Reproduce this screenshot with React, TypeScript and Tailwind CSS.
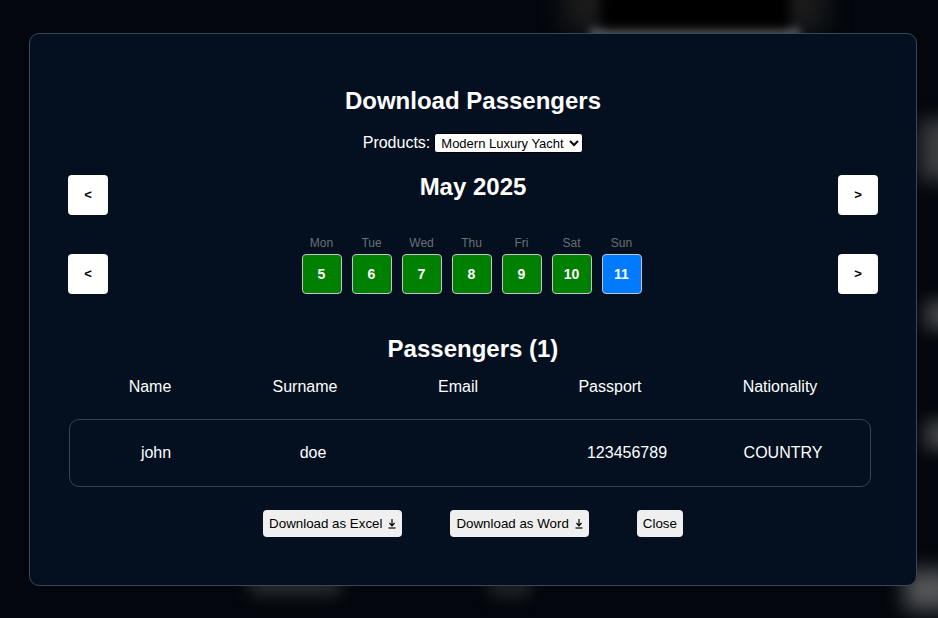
import React from 'react';

const DAYS = [
  { label: 'Mon', day: 5 },
  { label: 'Tue', day: 6 },
  { label: 'Wed', day: 7 },
  { label: 'Thu', day: 8 },
  { label: 'Fri', day: 9 },
  { label: 'Sat', day: 10 },
  { label: 'Sun', day: 11, selected: true },
];

function DownloadGlyph() {
  return (
    <svg width="8" height="11" viewBox="0 0 8 11" className="ml-[6px] inline-block">
      <path d="M4 1 V7.5 M1.5 5 L4 7.8 L6.5 5" stroke="#000" strokeWidth="1.2" fill="none" />
      <path d="M0.5 10 H7.5" stroke="#000" strokeWidth="1.2" />
    </svg>
  );
}

function NavButton({ children }: { children: React.ReactNode }) {
  return (
    <button className="w-[40px] h-[40px] bg-white rounded-[4px] text-black text-[13px] font-bold flex items-center justify-center shrink-0">
      {children}
    </button>
  );
}

export default function App() {
  return (
    <div className="relative w-[938px] h-[618px] overflow-hidden bg-[#03070d] font-['Liberation_Sans',Arial,sans-serif]">
      {/* blurred page behind the modal */}
      <div className="absolute left-[565px] top-[-20px] w-[260px] h-[50px] bg-[#1c1c1c] blur-[12px]" />
      <div className="absolute left-[590px] top-[28px] w-[210px] h-[12px] bg-[#777] blur-[5px] opacity-80" />
      <div className="absolute left-[600px] top-[-10px] w-[190px] h-[38px] bg-[#000] blur-[6px]" />
      <div className="absolute left-[920px] top-[120px] w-[40px] h-[60px] bg-[#555] blur-[10px] opacity-70" />
      <div className="absolute left-[925px] top-[300px] w-[40px] h-[30px] bg-[#666] blur-[8px] opacity-60" />
      <div className="absolute left-[925px] top-[420px] w-[40px] h-[30px] bg-[#666] blur-[8px] opacity-60" />
      <div className="absolute left-[905px] top-[570px] w-[50px] h-[40px] bg-[#777] blur-[10px] opacity-70" />
      <div className="absolute left-[250px] top-[575px] w-[90px] h-[20px] bg-[#444] blur-[8px] opacity-60" />
      <div className="absolute left-[490px] top-[578px] w-[40px] h-[18px] bg-[#444] blur-[8px] opacity-50" />

      <div className="absolute left-[29px] top-[33px] w-[888px] h-[553px] rounded-[10px] border border-[#3b4757] bg-[#04101f] px-[38px] text-white">
        <h2 className="mt-[53px] text-center text-[24px] leading-[28px] font-bold">Download Passengers</h2>

        <div className="mt-[18px] flex items-center justify-center gap-[4px] text-[16px] leading-[20px]">
          <span>Products:</span>
          <select className="h-[20px] bg-white text-black text-[13px] border border-black rounded-[3px] px-[2px] font-['Liberation_Sans',Arial,sans-serif]">
            <option>Modern Luxury Yacht</option>
          </select>
        </div>

        <div className="mt-[22px] flex items-start justify-between">
          <NavButton>&lt;</NavButton>
          <h2 className="mt-[-2px] text-[24px] leading-[28px] font-bold">May 2025</h2>
          <NavButton>&gt;</NavButton>
        </div>

        <div className="mt-[21px] flex items-end justify-between">
          <NavButton>&lt;</NavButton>
          <div className="flex gap-[10px] mr-[3px]">
            {DAYS.map((d) => (
              <div key={d.label} className="flex flex-col items-center">
                <span className="text-[12px] leading-[14px] text-[#6b6f75] mb-[4px]">{d.label}</span>
                <div
                  className={
                    d.selected
                      ? 'w-[40px] h-[40px] rounded-[4px] border border-[#bfc6cc] bg-[#007bff] flex items-center justify-center text-[14px] font-bold'
                      : 'w-[40px] h-[40px] rounded-[4px] border border-[#bfc6cc] bg-[#008000] flex items-center justify-center text-[14px] font-bold'
                  }
                >
                  {d.day}
                </div>
              </div>
            ))}
          </div>
          <NavButton>&gt;</NavButton>
        </div>

        <h2 className="mt-[41px] text-center text-[24px] leading-[28px] font-bold">Passengers (1)</h2>

        <div className="mt-[14px] ml-[2px] grid grid-cols-[160px_150px_156px_148px_192px] text-[16px] leading-[20px] text-center">
          <span>Name</span>
          <span>Surname</span>
          <span>Email</span>
          <span>Passport</span>
          <span>Nationality</span>
        </div>

        <div className="mt-[22px] ml-[1px] w-[802px] h-[68px] rounded-[10px] border border-[#39434f] grid grid-cols-[172px_142px_156px_174px_138px] items-center text-[16px] text-center">
          <span>john</span>
          <span>doe</span>
          <span></span>
          <span>123456789</span>
          <span>COUNTRY</span>
        </div>

        <div className="mt-[23px] flex justify-center gap-[48px] text-[13.33px] text-black">
          <button className="h-[27px] px-[6px] rounded-[4px] bg-[#efefef] flex items-center">
            Download as Excel
            <DownloadGlyph />
          </button>
          <button className="h-[27px] px-[6px] rounded-[4px] bg-[#efefef] flex items-center">
            Download as Word
            <DownloadGlyph />
          </button>
          <button className="h-[27px] px-[6px] rounded-[4px] bg-[#efefef] flex items-center">Close</button>
        </div>
      </div>
    </div>
  );
}
